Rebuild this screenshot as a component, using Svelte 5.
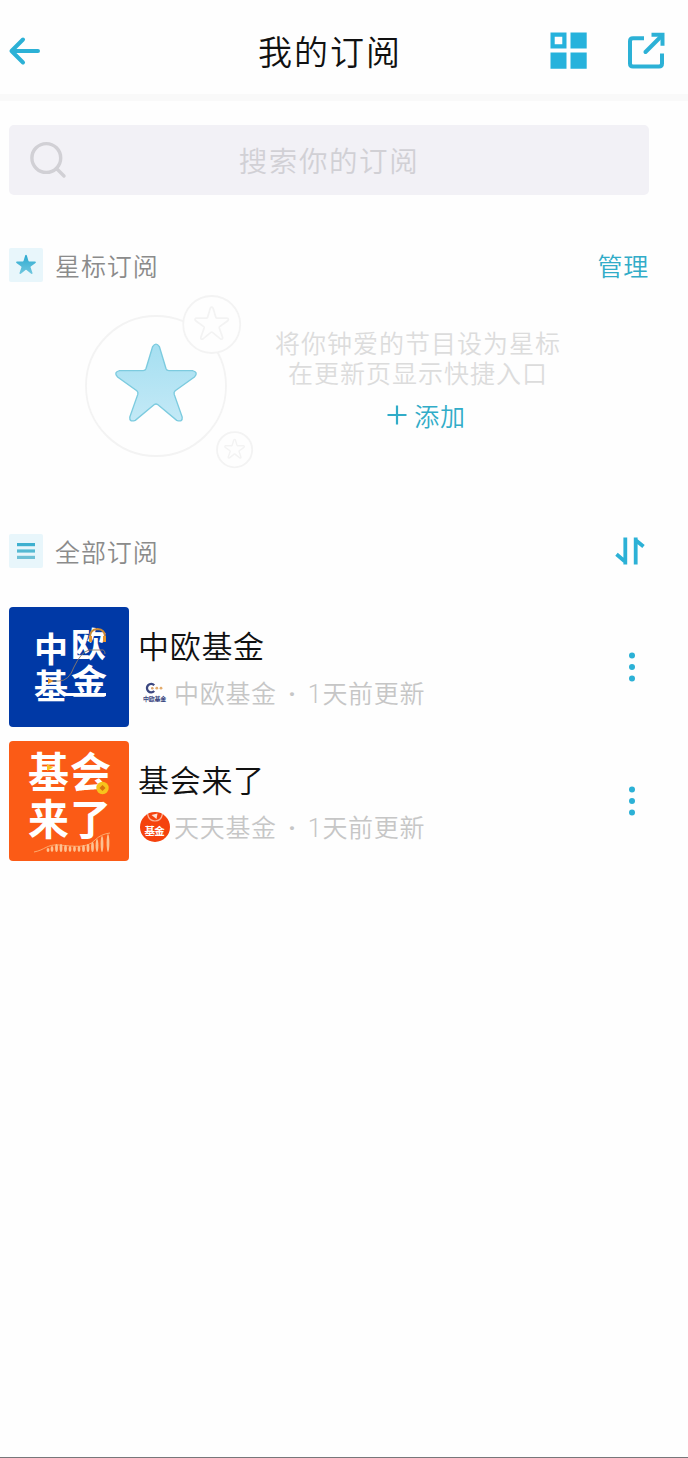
<script>
  /**
   * Subscriptions page: search box, starred section and the full list of shows.
   */

  const STAR =
    'M-3.4 -41 Q0 -46 3.4 -41 L10.2 -18.5 Q10.9 -16.6 13 -16.6 L37 -16.6 Q43.5 -15 39 -10.2 ' +
    'L19.5 3.8 Q17.8 5.3 18.5 7.5 L26.6 30.5 Q27.2 36 21 33.8 L2 18 Q0 16.6 -2 18 ' +
    'L-21 33.8 Q-27.2 36 -26.6 30.5 L-18.5 7.5 Q-17.8 5.3 -19.5 3.8 L-39 -10.2 ' +
    'Q-43.5 -15 -37 -16.6 L-13 -16.6 Q-10.9 -16.6 -10.2 -18.5 Z';

  const shows = [
    { id: 'zhongou', title: '中欧基金', author: '中欧基金', updated: '1天前更新' },
    { id: 'jihui', title: '基会来了', author: '天天基金', updated: '1天前更新' },
  ];

  // Bars under the orange cover's chart line: [x, half height]
  const bars = [
    [39, 2], [43, 3], [47.5, 4], [52, 4], [56.5, 3.5], [61, 3], [65.5, 3],
    [70, 3], [74.5, 3.5], [79, 4], [83.5, 5], [88, 6.5], [93, 8], [99, 9],
  ];

  let query = $state('');
</script>

<div class="page">
  <header class="topbar">
    <button class="icon-btn" aria-label="返回">
      <svg width="32" height="30" viewBox="0 0 32 30">
        <path d="M15 3.5 L3.5 15 L15 26.5 M3.5 15 H30" fill="none" stroke="#2cb1d6" stroke-width="4" stroke-linecap="round" stroke-linejoin="round" />
      </svg>
    </button>
    <h1>我的订阅</h1>
    <div class="actions">
      <button class="icon-btn" aria-label="网格">
        <svg width="37" height="37" viewBox="0 0 37 37" fill="#26b2dc">
          <path fill-rule="evenodd" d="M0.5 0.5 H16.5 V16.5 H0.5 Z M4.7 4.7 V12.3 H12.3 V4.7 Z" />
          <path d="M20.5 0.5 H36.7 V16.5 H20.5 Z M0.5 20.5 H16.5 V36.7 H0.5 Z M20.5 20.5 H36.7 V36.7 H20.5 Z" />
        </svg>
      </button>
      <button class="icon-btn" aria-label="分享">
        <svg width="38" height="38" viewBox="0 0 38 38" fill="none" stroke="#2cb1d6" stroke-width="4">
          <path d="M17 6.3 H6 Q3 6.3 3 9.3 V31.5 Q3 34.5 6 34.5 H32 Q35 34.5 35 31.5 V21.5" />
          <path d="M18.5 20 L35 3.5" stroke-linecap="round" />
          <path d="M24.5 2.7 H35.5 V13.8" />
        </svg>
      </button>
    </div>
  </header>

  <main>
    <label class="search">
      <svg width="38" height="38" viewBox="0 0 38 38" fill="none" stroke="#d1d0d5" stroke-width="3.4" stroke-linecap="round">
        <circle cx="17.3" cy="17" r="14.4" />
        <path d="M28 28 L35 35" />
      </svg>
      <input type="text" placeholder="搜索你的订阅" bind:value={query} />
    </label>

    <section class="starred">
      <div class="section-head">
        <svg width="34" height="34" viewBox="0 0 34 34">
          <defs>
            <linearGradient id="badge" x1="0" y1="0" x2="0" y2="1">
              <stop offset="0" stop-color="#2ba9d0" />
              <stop offset="1" stop-color="#70c7df" />
            </linearGradient>
          </defs>
          <rect width="34" height="34" rx="2" fill="#e8f6fb" />
          <path d={STAR} transform="translate(17 17.5) scale(0.245)" fill="url(#badge)" />
        </svg>
        <h2>星标订阅</h2>
        <button class="link">管理</button>
      </div>

      <div class="empty">
        <svg width="170" height="176" viewBox="84 294 170 176">
          <defs>
            <linearGradient id="star" x1="0" y1="0" x2="0" y2="1">
              <stop offset="0" stop-color="#a5dff1" />
              <stop offset="1" stop-color="#c3e9f6" />
            </linearGradient>
          </defs>
          <g fill="#fefefe" stroke="#f3f3f3" stroke-width="1.8">
            <circle cx="156" cy="386" r="70" />
            <circle cx="211.7" cy="324.5" r="28.5" />
            <circle cx="234.6" cy="449.7" r="17.6" />
            <path d={STAR} transform="translate(211.7 325) scale(0.41)" stroke-width="4.2" />
            <path d={STAR} transform="translate(234.6 449.8) scale(0.24)" stroke-width="6" />
          </g>
          <path d={STAR} transform="translate(156 387) scale(0.985)" fill="url(#star)" stroke="#7ccbdf" stroke-width="1.4" />
        </svg>
        <div class="hint">
          <p>将你钟爱的节目设为星标<br />在更新页显示快捷入口</p>
          <button class="link add">
            <svg width="20" height="20" viewBox="0 0 20 20">
              <path d="M10 0.5 V19.5 M0.5 10 H19.5" stroke="#31acc8" stroke-width="2.2" />
            </svg>
            添加
          </button>
        </div>
      </div>
    </section>

    <section class="all">
      <div class="section-head">
        <svg width="34" height="34" viewBox="0 0 34 34">
          <rect width="34" height="34" rx="2" fill="#e8f6fb" />
          <rect x="8" y="9" width="18" height="3.2" fill="#3eb0cf" />
          <rect x="8" y="15.4" width="18" height="3.2" fill="#55b9d2" />
          <rect x="8" y="21.8" width="18" height="3.2" fill="#6ec0d5" />
        </svg>
        <h2>全部订阅</h2>
        <button class="icon-btn sort" aria-label="排序">
          <svg width="30" height="28" viewBox="0 0 30 28" fill="none" stroke="#2cb1d6" stroke-width="3.8">
            <path d="M10.3 0.5 V27.5 M1.5 17.3 L10.5 25" />
            <path d="M20.7 27.5 V0.5 M20.5 3 L28.5 9.5" />
          </svg>
        </button>
      </div>

      <ul>
        {#each shows as show (show.id)}
          <li>
            {#if show.id === 'zhongou'}
              <svg class="cover" viewBox="0 0 120 120">
                <rect width="120" height="120" rx="4" fill="#0039a6" />
                <g class="art" fill="#fff" font-size="34">
                  <text x="25" y="55" textLength="34" lengthAdjust="spacingAndGlyphs">中</text>
                  <text x="62" y="50" textLength="35" lengthAdjust="spacingAndGlyphs">欧</text>
                  <text x="25" y="92" textLength="34" lengthAdjust="spacingAndGlyphs">基</text>
                  <text x="62" y="87" textLength="36" lengthAdjust="spacingAndGlyphs">金</text>
                </g>
                <path d="M55 87.5 H97" stroke="#fff" stroke-width="3" />
                <g fill="none" stroke="#c98a35">
                  <path d="M81 34 V30 Q81 22.5 88.5 22 Q96 22.5 96 30 V34" stroke-width="1.8" />
                  <path d="M81.5 29 V35 M95.5 29 V35" stroke="#e6962d" stroke-width="3" />
                  <path d="M42 74 H50 Q60 74 65 60 Q72 45 80 43 H92 Q96 42 96 47" stroke="#8d7a68" stroke-width="0.9" />
                </g>
                <path d="M39 71 L44.5 74 L39 77 Z" fill="#e6962d" />
              </svg>
            {:else}
              <svg class="cover" viewBox="0 0 120 120">
                <rect width="120" height="120" rx="4" fill="#fb5b16" />
                <g class="art" fill="#fff" font-size="42">
                  <text x="19" y="47" textLength="41" lengthAdjust="spacingAndGlyphs">基</text>
                  <text x="61" y="47" textLength="41" lengthAdjust="spacingAndGlyphs">会</text>
                  <text x="19" y="94" textLength="41" lengthAdjust="spacingAndGlyphs">来</text>
                  <text x="61" y="94" textLength="41" lengthAdjust="spacingAndGlyphs">了</text>
                </g>
                <path d="M38 23 L44 26.5 L38 30 Z" fill="#f7c31c" />
                <circle cx="93.5" cy="47" r="6.2" fill="#f7c31c" />
                <path d="M93.5 44 L96.5 47 L93.5 50 L90.5 47 Z" fill="#d9750d" />
                <path d="M25 111 C36 109 38 103 50 104 C64 105 78 108 86 99 Q92 93 101 92" fill="none" stroke="#fdb277" stroke-width="0.9" />
                {#each bars as [x, half]}
                  <ellipse cx={x} cy={111 - half} rx="1.4" ry={half} fill="#fdc191" />
                {/each}
              </svg>
            {/if}

            <div class="info">
              <h3>{show.title}</h3>
              <div class="meta">
                {#if show.id === 'zhongou'}
                  <svg width="30" height="30" viewBox="0 0 30 30">
                    <path d="M14.2 7.2 A4.2 4.2 0 1 0 14.2 13" fill="none" stroke="#3b4780" stroke-width="2.3" />
                    <circle cx="12.3" cy="10.2" r="1.3" fill="#dca36c" />
                    <circle cx="16.8" cy="10.2" r="1.4" fill="#e4ac6d" />
                    <circle cx="21" cy="10.2" r="1.4" fill="#e4ac6d" />
                    <text class="art" x="3" y="22.5" font-size="6" textLength="24" fill="#3b4780">中欧基金</text>
                  </svg>
                {:else}
                  <svg width="30" height="30" viewBox="0 0 30 30">
                    <circle cx="15" cy="15" r="15" fill="#f5420d" />
                    <path d="M7.5 2 Q9 9 15 9 Q21 9 22.5 2" fill="none" stroke="#fbb49a" stroke-width="1.2" />
                    <path d="M11.5 3 L17.5 1.5 L16.5 7 Z" fill="#fde0d5" />
                    <text class="art" x="4.5" y="23" font-size="10.5" textLength="21" fill="#fff">基金</text>
                  </svg>
                {/if}
                <span class="author">{show.author}</span>
                <span class="dot">·</span>
                <span>{show.updated}</span>
              </div>
            </div>

            <button class="icon-btn more" aria-label="更多">
              <svg width="8" height="30" viewBox="0 0 8 30" fill="#2cb1d6">
                <circle cx="4" cy="3.5" r="3" />
                <circle cx="4" cy="15" r="3" />
                <circle cx="4" cy="26.5" r="3" />
              </svg>
            </button>
          </li>
        {/each}
      </ul>
    </section>
  </main>
</div>

<style>
  :global(body) {
    background: #fefefe;
  }

  .page {
    box-sizing: border-box;
    min-height: 1458px;
    border-bottom: 1px solid #77777a;
    font-family: 'Noto Sans CJK SC', sans-serif;
    font-weight: 350;
    color: #111;
  }

  h1, h2, h3, p, ul {
    margin: 0;
    padding: 0;
    font-weight: inherit;
  }

  button {
    display: flex;
    padding: 0;
    border: 0;
    background: none;
    font: inherit;
    cursor: pointer;
  }

  svg {
    display: block;
    flex: none;
  }

  .topbar {
    box-sizing: border-box;
    display: grid;
    grid-template-columns: 1fr auto 1fr;
    align-items: center;
    height: 101px;
    padding: 7px 23px 0 8px;
    border-bottom: 7px solid #f9f9f9;
  }

  h1 {
    margin-left: -29px;
    padding: 1px 0 0 16px;
    font-size: 34px;
    line-height: 44px;
    letter-spacing: 2px;
  }

  .actions {
    display: flex;
    justify-content: flex-end;
    gap: 40px;
  }

  main {
    padding: 24px 39px 0 9px;
  }

  .search {
    display: flex;
    align-items: center;
    height: 70px;
    padding: 0 20px;
    border-radius: 5px;
    background: #f2f1f6;
  }

  .search input {
    flex: 1;
    min-width: 0;
    padding: 0 38px 2px 0;
    border: 0;
    outline: 0;
    background: none;
    font: inherit;
    font-size: 28.5px;
    letter-spacing: 1.6px;
    text-align: center;
  }

  .search input::placeholder {
    color: #d1d0d5;
  }

  .section-head {
    display: flex;
    align-items: center;
    height: 34px;
  }

  h2 {
    margin-left: 12px;
    font-size: 25px;
    line-height: 34px;
    letter-spacing: 0.9px;
    color: #8b8b8b;
  }

  .starred {
    margin-top: 53px;
  }

  .link {
    margin-left: auto;
    font-size: 25px;
    line-height: 34px;
    letter-spacing: 0.8px;
    color: #31acc8;
  }

  .empty {
    display: flex;
    height: 176px;
    margin: 12px 0 0 75px;
  }

  .hint {
    display: flex;
    flex-direction: column;
    align-items: center;
    margin: 33px 0 0 21px;
    text-align: center;
  }

  .hint p {
    font-size: 25px;
    line-height: 30px;
    letter-spacing: 1px;
    color: #dcdcdc;
  }

  .hint .add {
    align-items: center;
    gap: 7px;
    margin: 11px 0 0 17px;
  }

  .all {
    margin-top: 64px;
  }

  .sort {
    margin: 0 4px 0 auto;
  }

  ul {
    display: flex;
    flex-direction: column;
    gap: 14px;
    margin-top: 38.5px;
    list-style: none;
  }

  li {
    display: flex;
    align-items: center;
    height: 120px;
  }

  .cover {
    width: 120px;
    height: 120px;
  }

  .art {
    font-family: 'Liberation Sans', 'Noto Sans CJK SC', sans-serif;
    font-weight: 700;
  }

  .info {
    margin-left: 9px;
  }

  h3 {
    font-size: 31px;
    line-height: 42px;
    letter-spacing: 0.7px;
  }

  .meta {
    display: flex;
    align-items: center;
    height: 34px;
    margin: 10px 0 0 2px;
    font-family: Roboto, 'Noto Sans CJK SC', sans-serif;
    font-size: 25px;
    line-height: 34px;
    letter-spacing: 0.7px;
    color: #c6c6c6;
  }

  /* Roboto sets the baseline high for the CJK glyphs */
  .meta span {
    padding-top: 5px;
  }

  .author {
    margin-left: 4px;
  }

  .dot {
    width: 31px;
    font-weight: 700;
    text-align: center;
  }

  .more {
    margin: 0 13px 0 auto;
  }
</style>
